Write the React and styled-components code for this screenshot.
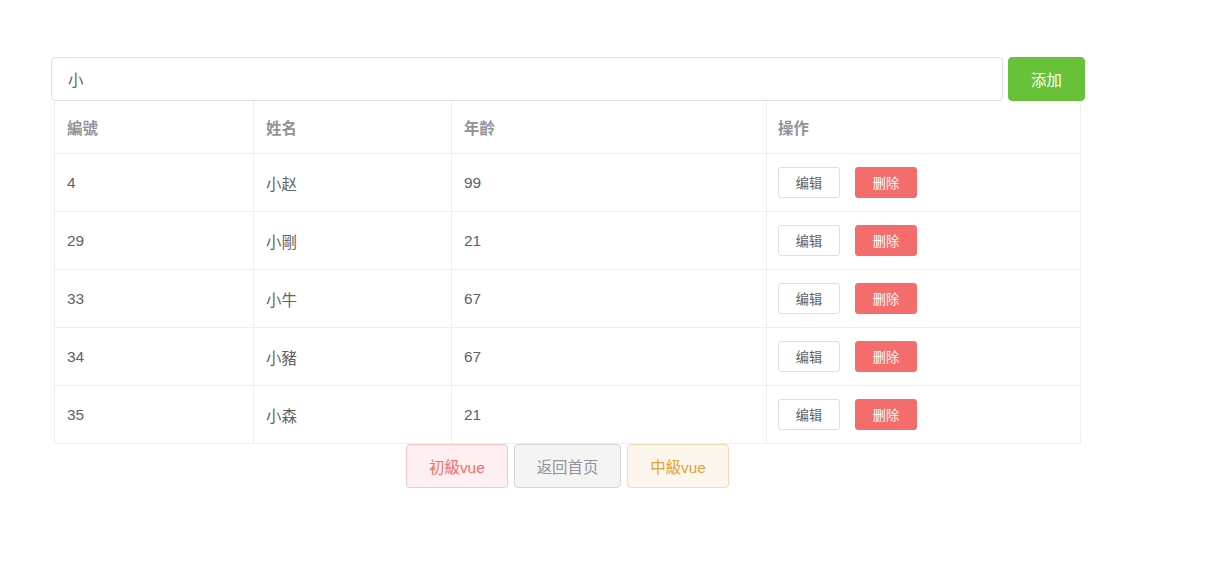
import React, { useState } from 'react';
import styled, { createGlobalStyle } from 'styled-components';

const GlobalStyle = createGlobalStyle`
  body {
    margin: 0;
    background: #fff;
    font-family: "Liberation Sans", "Noto Sans CJK SC", "Noto Sans CJK TC", sans-serif;
    color: #606266;
  }
  * { box-sizing: border-box; }
`;

const rows = [
  { id: 4, name: '小赵', age: 99 },
  { id: 29, name: '小剛', age: 21 },
  { id: 33, name: '小牛', age: 67 },
  { id: 34, name: '小豬', age: 67 },
  { id: 35, name: '小森', age: 21 },
];

const Page = styled.div`
  padding: 57px 0 0 51px;
  width: 1100px;
`;

const InputRow = styled.div`
  display: flex;
  gap: 5px;
  width: 1034px;
`;

const SearchInput = styled.input`
  width: 952px;
  height: 44px;
  border: 1px solid #dcdfe6;
  border-radius: 4px;
  padding: 0 16px;
  font-size: 15.4px;
  font-family: inherit;
  color: #606266;
  outline: none;
`;

const AddButton = styled.button`
  width: 77px;
  height: 44px;
  border: 1px solid #67c23a;
  background: #67c23a;
  color: #fff;
  border-radius: 4px;
  font-size: 15.4px;
  font-family: inherit;
  cursor: pointer;
`;

const Table = styled.div`
  margin-left: 3px;
  width: 1027px;
  border-left: 1px solid #ebeef5;
  border-right: 1px solid #ebeef5;
`;

const Row = styled.div`
  display: grid;
  grid-template-columns: 199px 198px 315px 313px;
  height: ${(p) => (p.$head ? '53px' : '58px')};
  border-bottom: 1px solid #ebeef5;
`;

const Cell = styled.div`
  display: flex;
  align-items: center;
  padding: 0 12px;
  border-right: 1px solid #ebeef5;
  font-size: 15.4px;
  color: ${(p) => (p.$head ? '#909399' : '#606266')};
  font-weight: ${(p) => (p.$head ? 700 : 400)};
  &:last-child { border-right: none; padding-left: 11px; }
`;

const Actions = styled.div`
  display: flex;
  gap: 15px;
`;

const MiniButton = styled.button`
  width: 62px;
  height: 31px;
  border-radius: 3px;
  font-size: 13.2px;
  font-family: inherit;
  cursor: pointer;
  border: 1px solid ${(p) => (p.$danger ? '#f56c6c' : '#dcdfe6')};
  background: ${(p) => (p.$danger ? '#f56c6c' : '#fff')};
  color: ${(p) => (p.$danger ? '#fff' : '#606266')};
`;

const NavRow = styled.div`
  display: flex;
  justify-content: center;
  gap: 6px;
  margin-left: 3px;
  width: 1027px;
`;

const tones = {
  danger: { bg: '#fef0f0', border: '#fbc4c4', color: '#f56c6c' },
  info: { bg: '#f4f4f5', border: '#d3d4d6', color: '#909399' },
  warning: { bg: '#fdf6ec', border: '#f5dab1', color: '#e6a23c' },
};

const NavButton = styled.button`
  height: 44px;
  padding: 0 22px;
  border-radius: 4px;
  font-size: 15.4px;
  font-family: inherit;
  cursor: pointer;
  background: ${(p) => tones[p.$tone].bg};
  border: 1px solid ${(p) => tones[p.$tone].border};
  color: ${(p) => tones[p.$tone].color};
`;

export default function App() {
  const [keyword, setKeyword] = useState('小');

  return (
    <>
      <GlobalStyle />
      <Page>
        <InputRow>
          <SearchInput value={keyword} onChange={(e) => setKeyword(e.target.value)} />
          <AddButton>添加</AddButton>
        </InputRow>
        <Table>
          <Row $head>
            <Cell $head>編號</Cell>
            <Cell $head>姓名</Cell>
            <Cell $head>年齡</Cell>
            <Cell $head>操作</Cell>
          </Row>
          {rows.map((r) => (
            <Row key={r.id}>
              <Cell>{r.id}</Cell>
              <Cell>{r.name}</Cell>
              <Cell>{r.age}</Cell>
              <Cell>
                <Actions>
                  <MiniButton>编辑</MiniButton>
                  <MiniButton $danger>删除</MiniButton>
                </Actions>
              </Cell>
            </Row>
          ))}
        </Table>
        <NavRow>
          <NavButton $tone="danger">初級vue</NavButton>
          <NavButton $tone="info">返回首页</NavButton>
          <NavButton $tone="warning">中級vue</NavButton>
        </NavRow>
      </Page>
    </>
  );
}
